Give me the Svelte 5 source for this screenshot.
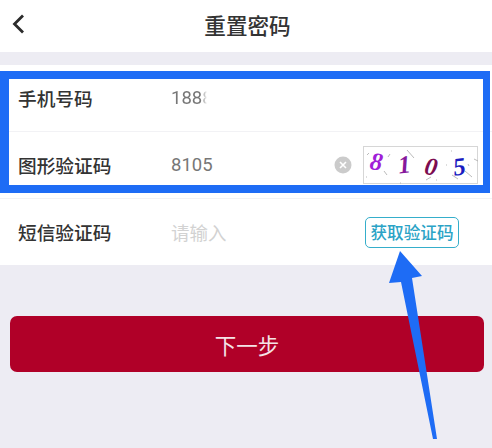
<script>
	const rows = [
		{ label: '手机号码', value: '1888', kind: 'phone' },
		{ label: '图形验证码', value: '8105', kind: 'captcha' },
		{ label: '短信验证码', value: '请输入', kind: 'sms' }
	];

	const digits = [
		{ ch: '8', color: '#a01fd8', rot: 8, up: -4 },
		{ ch: '1', color: '#86189c', rot: -6, up: -1 },
		{ ch: '0', color: '#7c0c50', rot: 10, up: 1 },
		{ ch: '5', color: '#1a1cc0', rot: -8, up: 1 }
	];

	const noise = [
		[3, 8, 5, 6], [24, 10, 26, 7], [43, 3, 50, 11], [20, 24, 23, 28], [62, 33, 67, 30],
		[36, 36, 37, 36], [72, 33, 73, 33], [87, 4, 88, 4], [88, 28, 94, 32], [101, 24, 108, 30],
		[110, 12, 114, 14], [2, 30, 3, 30], [82, 18, 83, 18], [104, 17, 105, 19]
	];
</script>

<div class="page">
	<header>
		<svg class="back" width="14" height="22" viewBox="0 0 14 22">
			<path d="M12 2.5 3.5 11l8.5 8.5" fill="none" stroke="#2b2b2b" stroke-width="2.8" />
		</svg>
		<h1>重置密码</h1>
	</header>

	<section class="form">
		{#each rows as row}
			<div class="row">
				<span class="label">{row.label}</span>
				{#if row.kind === 'phone'}
					<span class="value phone">{row.value}</span>
				{:else if row.kind === 'captcha'}
					<span class="value">{row.value}</span>
					<span class="clear">
						<svg width="18" height="18" viewBox="0 0 18 18">
							<circle cx="9" cy="9" r="8.5" fill="#cbcbcb" />
							<path d="M6 6l6 6M12 6l-6 6" stroke="#fff" stroke-width="1.6" />
						</svg>
					</span>
					<div class="captcha">
						<svg class="noise" width="115" height="38" viewBox="0 0 115 38">
							{#each noise as n}
								<line x1={n[0]} y1={n[1]} x2={n[2]} y2={n[3]} stroke="#aaa" stroke-width="0.8" />
							{/each}
						</svg>
						{#each digits as d}
							<span class="digit" style="color: {d.color}; transform: translateY({d.up}px) rotate({d.rot}deg)">{d.ch}</span>
						{/each}
					</div>
				{:else}
					<span class="value hint">{row.value}</span>
					<button>获取验证码</button>
				{/if}
			</div>
		{/each}
	</section>

	<div class="action">
		<button class="next">下一步</button>
	</div>

	<!-- annotation drawn on top of the screenshot -->
	<div class="highlight"></div>
	<svg class="arrow" width="492" height="448" viewBox="0 0 492 448">
		<path d="M400 251 422 276 412 278 437 439 433 439 401 282 389 283Z" fill="#1e6cf5" />
	</svg>
</div>

<style>
	:global(body) {
		margin: 0;
	}

	.page {
		position: relative;
		width: 492px;
		height: 448px;
		overflow: hidden;
		background: #edecf3;
		font-family: Roboto, 'Noto Sans CJK SC', sans-serif;
	}

	header {
		height: 49px;
		padding: 0 0 3px 3px;
		background: #fff;
		display: flex;
		align-items: center;
		justify-content: center;
		position: relative;
		margin-bottom: 13px;
	}

	.back {
		position: absolute;
		left: 11px;
		top: 13px;
	}

	h1 {
		margin: 0;
		font-size: 21.6px;
		font-weight: 500;
		color: #333;
	}

	.form {
		background: #fff;
	}

	.row {
		height: 66px;
		display: flex;
		align-items: center;
		padding-left: 18px;
		border-bottom: 1px solid #f2f2f5;
	}

	.row:last-child {
		border-bottom: none;
	}

	.label {
		width: 153px;
		padding-bottom: 2px;
		font-size: 18.7px;
		font-weight: 500;
		color: #333;
	}

	.value {
		font-size: 18.5px;
		color: #777;
	}

	.phone {
		-webkit-mask-image: linear-gradient(to right, #000 30px, transparent 36px);
		mask-image: linear-gradient(to right, #000 30px, transparent 36px);
	}

	.hint {
		color: #d2d2d2;
	}

	.clear {
		margin-left: auto;
		display: flex;
		margin-right: 11px;
	}

	.captcha {
		width: 115px;
		height: 38px;
		margin-right: 14px;
		position: relative;
		box-sizing: border-box;
		border: 1px solid #d6d6d6;
		display: flex;
		align-items: center;
		gap: 15px;
		padding-left: 6px;
		font-family: 'Liberation Serif', serif;
		font-weight: 700;
		font-style: italic;
	}

	.noise {
		position: absolute;
		left: 0;
		top: 0;
	}

	.digit {
		font-size: 25px;
		line-height: 1;
		position: relative;
	}

	.row button {
		margin-left: auto;
		margin-right: 33px;
		width: 94px;
		height: 31px;
		padding: 0;
		background: #fff;
		border: 1.5px solid #35aecb;
		border-radius: 5px;
		font-family: inherit;
		font-size: 16.6px;
		font-weight: 500;
		color: #2ba3c6;
	}

	.action {
		padding: 51px 8px 0 10px;
	}

	.next {
		display: block;
		width: 100%;
		height: 56px;
		padding: 0;
		border: none;
		border-radius: 7px;
		background: #b00028;
		color: #f4e3e6;
		font-family: inherit;
		font-size: 21.5px;
	}

	.highlight {
		position: absolute;
		left: 0;
		top: 71px;
		width: 490px;
		height: 122px;
		box-sizing: border-box;
		border: 8px solid #1e6cf5;
		border-left-width: 9px;
		border-right-width: 7px;
	}

	.arrow {
		position: absolute;
		left: 0;
		top: 0;
	}
</style>
